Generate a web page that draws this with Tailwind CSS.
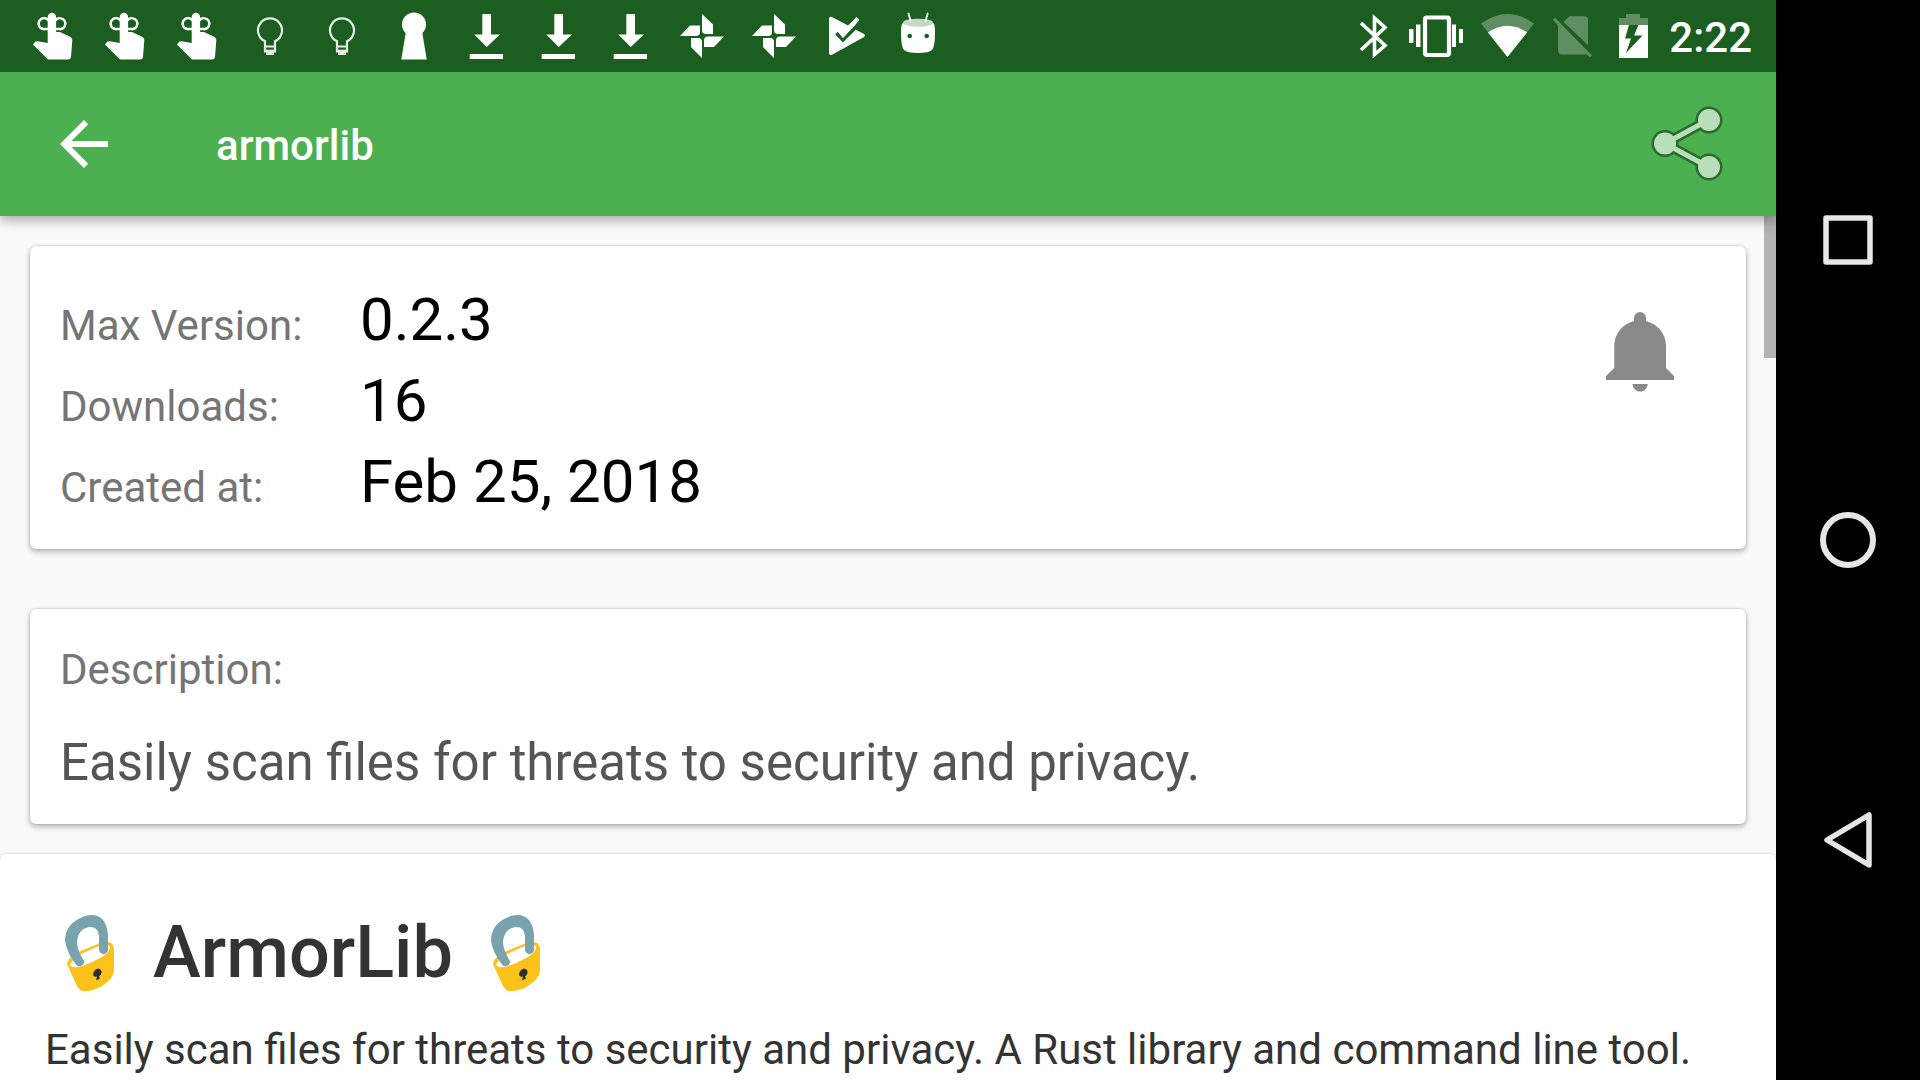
<!DOCTYPE html>
<html lang="en">
<head>
<meta charset="utf-8">
<meta name="viewport" content="width=device-width, initial-scale=1">
<title>armorlib</title>
<script src="https://cdn.jsdelivr.net/npm/@tailwindcss/browser@4"></script>
</head>
<body class="flex h-screen overflow-hidden bg-black font-[Roboto,sans-serif]">
<svg class="hidden" aria-hidden="true">
  <symbol id="reminder" viewBox="0 0 72 72">
    <path fill="#fff" d="M29.700 17a4.200 4.200 0 0 1 8.400 0V32H42l10.500 5q2 1 1.800 3.500L53 57q-.4 2.500-3 2.500H31q-1 0-2-1L15 44.500l1.500-2q1-1.500 3-1.200L29.700 43z"/>
    <path fill="none" stroke="#fff" stroke-width="2.400" d="M31 21a5.500 5.500 0 1 0-5.700 8H43a5.500 5.500 0 1 0-6-8"/>
  </symbol>
  <symbol id="bulb" viewBox="0 0 72 72">
    <path fill="none" stroke="#e8efe9" stroke-width="2.200" d="M31 51.500V41.300a12 12 0 1 1 10 0V51.500zM31 46.500h10M31 50.800h10"/>
    <path fill="#e8efe9" d="M32 51h8v4h-8z"/>
  </symbol>
  <symbol id="keyhole" viewBox="0 0 72 72">
    <circle cx="36" cy="24.500" r="12" fill="#fff"/>
    <path fill="#fff" d="M28 31h16l4.700 28.500H23.300z"/>
  </symbol>
  <symbol id="download" viewBox="0 0 72 72">
    <path fill="#fff" d="M32.300 14H41v20.500h9L36.700 47 24.300 34.500h8zM19.700 54H53v5H19.700z"/>
  </symbol>
  <symbol id="pinwheel" viewBox="0 0 72 72">
    <path fill="#fff" d="M36 14l11 10.500V34h-7q-4 0-4-4zM14 36l10-10.500h10V32q0 4-4 4zM25 38h7q4 0 4 4v16L25 47zM58 36.500L48 47H38v-6.500q0-4 4-4z"/>
  </symbol>
  <symbol id="lock" viewBox="0 0 50 76">
    <path fill="#fcc21b" d="M2 49Q3 43 11 38L35 28q13-4 14 6V56Q48 64 37 71 26 77 17 76 13 74 11 69z"/>
    <path fill="#fff" d="M5 50Q7 44 16 39L36 30q9-2 9 3-1 5-10 10-9 5-18 8Q8 54 5 50z"/>
    <path fill="#78a2ad" d="M19 46a4.500 4.500 0 0 1-8 3.500Q2 38 0 26 0 8 20 1 40-4 43 19V34a4 4 0 0 1-9 1V21Q33 11 24 12 13 14 12 27 12 35 19 46z"/>
    <path fill="#2f2f2f" d="M28 60q0-5 5-6.500 5 1 3 6l-2 2 1 2-4 2 1-4q-3 1-4-1.500z"/>
  </symbol>
</svg>

<main class="relative flex min-w-0 flex-1 flex-col bg-[#fafafa]">
  <header class="z-10 shrink-0 shadow-[0_4px_12px_rgba(0,0,0,0.35)]">
    <div class="flex h-[72px] items-center bg-[#1b5e20] pr-6 pl-[18px]">
      <svg class="size-[72px]"><use href="#reminder"/></svg>
      <svg class="size-[72px]"><use href="#reminder"/></svg>
      <svg class="size-[72px]"><use href="#reminder"/></svg>
      <svg class="size-[72px]"><use href="#bulb"/></svg>
      <svg class="size-[72px]"><use href="#bulb"/></svg>
      <svg class="size-[72px]"><use href="#keyhole"/></svg>
      <svg class="size-[72px]"><use href="#download"/></svg>
      <svg class="size-[72px]"><use href="#download"/></svg>
      <svg class="size-[72px]"><use href="#download"/></svg>
      <svg class="size-[72px]"><use href="#pinwheel"/></svg>
      <svg class="size-[72px]"><use href="#pinwheel"/></svg>
      <svg class="size-[72px]" viewBox="0 0 72 72">
        <path fill="#fff" d="M19 19q0-3 3-2l16 8.500L46.500 17l2.800 2.800-6.300 8.500L54 34q2 1.500 0 3L22.500 54.500Q19 56 19 53z"/>
        <path fill="none" stroke="#1b5e20" stroke-width="3.600" d="M26.500 33l6.500 7 16-16"/>
        <path fill="none" stroke="#fff" stroke-width="3.500" d="M29.500 31l3.500 4.500L47.800 18.700"/>
      </svg>
      <svg class="size-[72px]" viewBox="0 0 72 72">
        <path fill="#fff" d="M21 23h30q2 0 2 10 0 14-3 17-3 3-14 3t-14-3q-3-3-3-17 0-10 2-10z"/>
        <ellipse cx="36" cy="22.700" rx="15" ry="4" fill="#c5d8c6"/>
        <path stroke="#fff" stroke-width="1.800" stroke-linecap="round" d="M26.500 13.500l2 7M45.700 13.500l-2 7"/>
        <circle cx="27.700" cy="36" r="2.300" fill="#1b5e20"/><circle cx="44.700" cy="36" r="2.300" fill="#1b5e20"/>
      </svg>
      <div class="ml-auto flex items-center">
        <svg class="h-[72px] w-12" viewBox="0 0 48 72"><path fill="none" stroke="#fff" stroke-width="3.600" d="M9 23l24 22.500-10.500 9V18L33 27.500 9 50"/></svg>
        <svg class="h-[72px] w-[76px]" viewBox="0 0 76 72">
          <rect x="25" y="17.500" width="24" height="37.500" rx="2" fill="none" stroke="#fff" stroke-width="4.200"/>
          <path fill="#fff" d="M16 24.500h4.500V47H16zM9 29h4.500v14H9zM52 24.500h4V47h-4zM59 29h4v14h-4z"/>
        </svg>
        <svg class="h-[72px] w-[68px]" viewBox="0 0 68 72">
          <path fill="#fff" fill-opacity=".3" d="M31.500 57L5 23.500q26.500-19 53 0z"/>
          <path fill="#fff" d="M31.500 57L12 32.500q19.500-13.500 39 0z"/>
        </svg>
        <svg class="h-[72px] w-[60px]" viewBox="0 0 60 72">
          <path fill="#fff" fill-opacity=".3" d="M19.500 22l6-5.700h15q3.500 0 3.500 3.500V45zM9 19.500l2-1.700 37 37.700-2 2-3.300-3H18q-4 0-4-4V25.500z"/>
        </svg>
        <svg class="h-[72px] w-[60px]" viewBox="0 0 60 72">
          <path fill="#fff" fill-opacity=".3" d="M15 18h7v-4h14v4h8v7H15z"/>
          <path fill="#fff" fill-rule="evenodd" d="M15 25h29v33H15zM25 25l-4 13.500h6L22 53l16.500-17.500H30L34.500 25z"/>
        </svg>
        <time class="pt-1 pl-[5px] text-[42px] leading-[54px] font-medium text-white">2:22</time>
      </div>
    </div>
    <div class="flex h-36 items-center bg-[#4caf50] pr-[54px] pl-12">
      <button type="button" aria-label="Back" class="size-[72px]">
        <svg class="size-[72px]" viewBox="0 0 24 24" fill="#fff"><path d="M20 11H7.830l5.590-5.590L12 4l-8 8 8 8 1.410-1.410L7.830 13H20z"/></svg>
      </button>
      <h1 class="pt-1 pl-24 text-[42px] leading-[54px] font-medium text-white">armorlib</h1>
      <button type="button" aria-label="Share" class="ml-auto size-[72px]">
        <svg class="size-[72px] overflow-visible" viewBox="0 0 72 72">
          <g fill="#2c6a30"><path fill="none" stroke="#2c6a30" stroke-width="10" d="M58.500 12L15 35.500 58.500 59"/><circle cx="15" cy="35.500" r="13.500"/><circle cx="59" cy="12" r="13.500"/><circle cx="59" cy="59" r="13.500"/></g>
          <g fill="#b8dfba"><path fill="none" stroke="#b8dfba" stroke-width="5" d="M58.500 12L15 35.500 58.500 59"/><circle cx="15" cy="35.500" r="11"/><circle cx="59" cy="12" r="11"/><circle cx="59" cy="59" r="11"/></g>
        </svg>
      </button>
    </div>
  </header>

  <div class="absolute top-[216px] right-0 h-[142px] w-3 bg-[#b3b3b3]"></div>

  <section class="mx-[30px] mt-[30px] flex shrink-0 items-start justify-between rounded-md bg-white pt-[33px] pr-[72px] pb-[27px] pl-[30px] shadow-[0_3px_6px_rgba(0,0,0,0.26),0_0_3px_rgba(0,0,0,0.22)]">
    <dl class="grid grid-cols-[300px_auto] items-baseline">
      <dt class="text-[42px] leading-[60px] text-[#757575]">Max Version:</dt><dd class="text-[60px] leading-[81px] text-black">0.2.3</dd>
      <dt class="text-[42px] leading-[60px] text-[#757575]">Downloads:</dt><dd class="text-[60px] leading-[81px] text-black">16</dd>
      <dt class="text-[42px] leading-[60px] text-[#757575]">Created at:</dt><dd class="text-[60px] leading-[81px] text-black">Feb 25, 2018</dd>
    </dl>
    <button type="button" aria-label="Notify me" class="pt-[33px]">
      <svg class="h-20 w-[68px]" viewBox="0 0 68 80" fill="#898989"><path d="M28 9V6a6 6 0 0 1 12 0v3c11 3 20 12 20 25v22l8 8v4H0v-4l8.300-8V34C8.300 21 17 12 28 9zM26.500 72h15.300c-1 10-14.300 10-15.300 0z"/></svg>
    </button>
  </section>

  <section class="mx-[30px] mt-[60px] shrink-0 rounded-md bg-white px-[30px] pt-[31px] pb-[25px] shadow-[0_3px_6px_rgba(0,0,0,0.26),0_0_3px_rgba(0,0,0,0.22)]">
    <h2 class="text-[42px] leading-[60px] text-[#757575]">Description:</h2>
    <p class="mt-[27px] text-[51px] leading-[72px] text-[#555]">Easily scan files for threats to security and privacy.</p>
  </section>

  <article class="mt-[30px] flex-1 rounded-t-md bg-white px-[45px] pt-[51px] text-[#333] shadow-[0_0_3px_rgba(0,0,0,0.2)]">
    <h2 class="flex items-center gap-[38px] pl-5 text-[72px] leading-[96px] font-medium">
      <svg class="h-[76px] w-[50px]" role="img" aria-label="Lock"><use href="#lock"/></svg>
      ArmorLib
      <svg class="h-[76px] w-[50px]" role="img" aria-label="Lock"><use href="#lock"/></svg>
    </h2>
    <p class="mt-[19px] text-[42px] leading-[60px]">Easily scan files for threats to security and privacy. A Rust library and command line tool.</p>
  </article>
</main>

<nav class="flex w-36 shrink-0 flex-col py-[90px]" aria-label="System navigation">
  <button type="button" aria-label="Recent apps" class="flex flex-1 items-center justify-center"><svg class="size-[60px]" viewBox="0 0 60 60" fill="none" stroke="#e6e6e6" stroke-width="5.500" stroke-linejoin="round"><rect x="8" y="8" width="44" height="44"/></svg></button>
  <button type="button" aria-label="Home" class="flex flex-1 items-center justify-center"><svg class="size-[60px]" viewBox="0 0 60 60" fill="none" stroke="#e6e6e6" stroke-width="6"><circle cx="30" cy="30" r="25"/></svg></button>
  <button type="button" aria-label="Back" class="flex flex-1 items-center justify-center"><svg class="size-[60px]" viewBox="0 0 60 60" fill="none" stroke="#e6e6e6" stroke-width="5.500" stroke-linejoin="round"><path d="M51 5v50L9 30z"/></svg></button>
</nav>
</body>
</html>
